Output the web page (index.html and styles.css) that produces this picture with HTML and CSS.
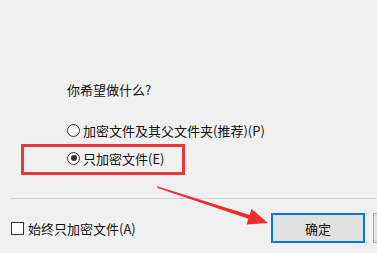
FILE: index.html
```html
<!DOCTYPE html>
<html lang="zh-CN">
<head>
<meta charset="utf-8">
<title>加密警告</title>
<link rel="stylesheet" href="styles.css">
</head>
<body>
<div class="dialog">
  <div class="content">
    <div class="question">你希望做什么?</div>
    <div class="options">
      <label class="option"><span class="radio"></span><span>加密文件及其父文件夹(推荐)(P)</span></label>
      <label class="option"><span class="radio checked"></span><span>只加密文件(E)</span></label>
    </div>
  </div>
  <div class="sep"></div>
  <div class="footer">
    <label class="check"><span class="box"></span><span>始终只加密文件(A)</span></label>
    <button class="btn primary">确定</button>
    <button class="btn" aria-label="取消"></button>
  </div>
  <div class="highlight"></div>
  <svg class="arrow" width="377" height="253" viewBox="0 0 377 253">
    <polygon points="157,186.3 249.6,214.9 251.5,209 268,223 246.5,224.6 248.4,218.7 157.6,188" fill="#ee2c2c"/>
  </svg>
</div>
</body>
</html>
```
FILE: styles.css
```css
html, body {
  margin: 0;
  padding: 0;
  background: #f0f0f0;
  overflow: hidden;
}
.dialog {
  position: relative;
  width: 377px;
  height: 253px;
  overflow: hidden;
  font-family: "Noto Sans CJK SC", "Microsoft YaHei", sans-serif;
  font-size: 13px;
  color: #111;
}
.content {
  padding: 80px 0 0 67px;
}
.question {
  height: 20px;
  line-height: 20px;
}
.options {
  margin-top: 16px;
  display: flex;
  flex-direction: column;
}
.option {
  height: 28px;
  display: flex;
  align-items: center;
  gap: 3px;
}
.radio {
  width: 13px;
  height: 13px;
  box-sizing: border-box;
  border: 1px solid #333;
  border-radius: 50%;
  background: #fff;
  display: flex;
  align-items: center;
  justify-content: center;
}
.radio.checked::after {
  content: "";
  width: 6px;
  height: 6px;
  border-radius: 50%;
  background: #333;
}
.sep {
  margin: 26px 0 0 11px;
  border-top: 1px solid #d4d4d4;
}
.footer {
  display: flex;
  align-items: center;
  padding: 14px 0 0 11px;
}
.check {
  display: flex;
  align-items: center;
  gap: 4px;
}
.box {
  width: 13px;
  height: 13px;
  box-sizing: border-box;
  border: 1px solid #333;
  background: #fff;
}
.btn {
  flex: none;
  width: 94px;
  height: 30px;
  box-sizing: border-box;
  border: 1px solid #adadad;
  background: #e1e1e1;
  font: inherit;
  color: #111;
  padding: 0;
}
.btn.primary {
  margin-left: auto;
  margin-right: 8px;
  border: 2px solid #0078d7;
}
.footer .btn:last-child {
  margin-right: -90px;
}
.highlight {
  position: absolute;
  left: 21px;
  top: 144px;
  width: 164px;
  height: 31px;
  box-sizing: border-box;
  border: 3px solid #e8363a;
}
.arrow {
  position: absolute;
  left: 0;
  top: 0;
}
```
